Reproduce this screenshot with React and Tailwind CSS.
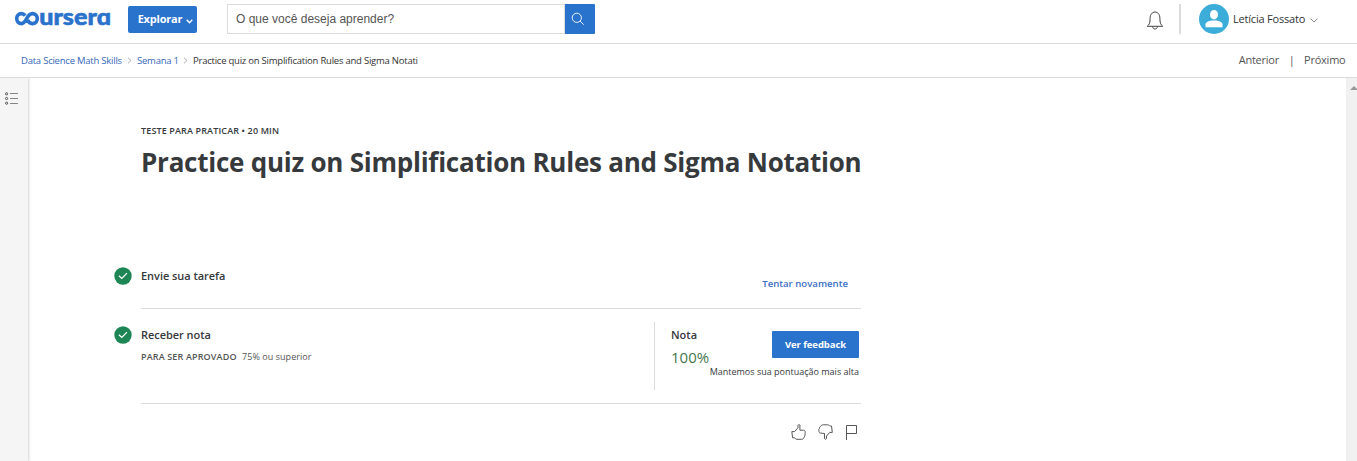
import React from "react";

function Logo() {
  return (
    <svg className="block h-[32px] w-[98px] shrink-0" viewBox="0 -8 98 32" role="img" aria-label="coursera">
      <path
        d="M11.2 5.6C10.2 4.3 8.9 3.6 7.5 3.6C4.7 3.6 2.7 5.8 2.7 8.6S4.7 13.6 7.5 13.6C12.6 13.6 12.4 3.6 18.4 3.6C21.3 3.6 23.3 5.8 23.3 8.6S21.3 13.6 18.4 13.6C15.8 13.6 14.2 12 13.6 9.8"
        fill="none" stroke="#2a73cc" strokeWidth="3.6"
      />
      <text x="25.2" y="15.3" textLength="72" lengthAdjust="spacingAndGlyphs" fill="#2a73cc" stroke="#2a73cc" strokeWidth="0.6"
        className="font-['Lato',sans-serif] text-[23px] font-black">urserɑ</text>
    </svg>
  );
}

function Check() {
  return (
    <svg className="block size-[18px] shrink-0" viewBox="0 0 18 18">
      <circle cx="9" cy="9" r="8.7" fill="#1e8555" />
      <path d="M4.9 8.7L7.8 11.4L13 6.1" fill="none" stroke="#fff" strokeWidth="1.3" />
    </svg>
  );
}

function Chevron() {
  return (
    <svg className="block h-[7px] w-[5px] shrink-0" viewBox="0 0 5 7">
      <path d="M1 .7L4 3.5L1 6.3" fill="none" stroke="#999" strokeWidth=".8" />
    </svg>
  );
}

function TopBar() {
  return (
    <header className="flex h-11 items-start border-b border-[#dcdcdc] pl-[14px]">
      <div className="pt-[2px]"><Logo /></div>
      <button className="mt-[6px] ml-[16px] flex h-[27px] w-[69px] items-center rounded-[2px] bg-[#2a73cc] pl-[9px] text-[11px] font-bold text-white">
        <span className="w-[46px] tracking-[-0.2px]">Explorar</span>
        <svg className="mt-[3px] ml-[3px] h-[5px] w-[7px]" viewBox="0 0 7 5">
          <path d="M.7 .8L3.5 3.7L6.3 .8" fill="none" stroke="#fff" strokeWidth="1.4" />
        </svg>
      </button>
      <div className="mt-1 ml-[30px] flex h-[30px] w-[368px]">
        <div className="flex flex-1 items-center border border-[#dcdcdc] pl-2 font-['Liberation_Sans',sans-serif] text-[12px] text-[#555]">
          O que você deseja aprender?
        </div>
        <button className="flex w-[30px] items-center rounded-r-[1px] bg-[#2a73cc] pl-[6px]">
          <svg className="size-[14px]" viewBox="0 0 14 14" fill="none" stroke="#fff" strokeWidth=".9">
            <circle cx="5.8" cy="5.8" r="4.6" /><path d="M9.1 9.1L12.7 12.7" />
          </svg>
        </button>
      </div>
      <div className="mt-1 ml-auto flex h-[30px] items-center">
        <svg className="mt-[3px] h-[19px] w-[18px]" viewBox="0 0 18 19" fill="none" stroke="#444" strokeWidth="1">
          <path d="M1.2 15.3C3.6 13.5 4.1 11.5 4.1 7.2C4.1 3.6 6.2 1 9 1S13.9 3.6 13.9 7.2C13.9 11.5 14.4 13.5 16.8 15.3Z" />
          <path d="M6.6 15.5C6.8 17.2 7.7 18 9 18S11.2 17.2 11.4 15.5" />
        </svg>
        <div className="ml-[15px] h-[30px] w-[2px] bg-[#dcdcdc]" />
        <svg className="ml-[18px] size-[30px]" viewBox="0 0 30 30">
          <circle cx="15" cy="15" r="15" fill="#3cadd8" />
          <ellipse cx="15" cy="10.7" rx="4" ry="4.8" fill="#fff" />
          <path d="M6.5 23.2V20.3C6.5 17.9 10.2 17 12.5 16.5H17.5C19.8 17 23.5 17.9 23.5 20.3V23.2Z" fill="#fff" />
        </svg>
        <span className="ml-[4px] w-[73px] text-[11px] tracking-[-0.2px] whitespace-nowrap text-[#333]">Letícia Fossato</span>
        <svg className="mt-[2px] ml-[4px] h-[5px] w-[8px]" viewBox="0 0 8 5">
          <path d="M.5 .6L4 4.1L7.5 .6" fill="none" stroke="#777" strokeWidth=".9" />
        </svg>
        <div className="w-[39px]" />
      </div>
    </header>
  );
}

function Breadcrumbs() {
  return (
    <nav className="flex h-[34px] items-center border-b border-[#dcdcdc] pr-[11.5px] pl-[21px] text-[9.5px] whitespace-nowrap text-[#333]">
      <span className="mt-px w-[101px] tracking-[-0.23px] text-[#3568b8]">Data Science Math Skills</span>
      <div className="ml-[5px]"><Chevron /></div>
      <span className="mt-px ml-[5px] w-[41px] tracking-[-0.23px] text-[#3568b8]">Semana 1</span>
      <div className="ml-[5px]"><Chevron /></div>
      <span className="mt-px ml-[5px] tracking-[-0.23px]">Practice quiz on Simplification Rules and Sigma Notati</span>
      <div className="ml-auto flex text-[11px] tracking-[-0.23px] text-[#555]">
        <span>Anterior</span><span className="w-[25px] text-center">|</span><span>Próximo</span>
      </div>
    </nav>
  );
}

function Feedback() {
  return (
    <div className="flex h-4 justify-end gap-[12px] pr-[3px]">
      <svg className="h-4 w-[15px]" viewBox="0 0 15 16" fill="none" stroke="#444" strokeWidth=".9">
        <path d="M.8 7.6H3.6L7 3.7V1.2C7.4 .4 8.7 .4 8.9 1.3V6.2H12.4C13.7 6.3 14.4 7.2 14.2 8.3C13.7 9.2 14.4 10 14.1 11C13.5 11.7 13.8 12.8 13 13.5C12.5 14.8 11.7 15.3 10.5 15.3H6C4.5 15.3 4.3 14 3.3 13.8H1.6Z" />
      </svg>
      <svg className="h-4 w-[15px]" viewBox="0 0 15 16" fill="none" stroke="#444" strokeWidth=".9">
        <path d="M2.6 9.1C1.3 8.8 .6 8 1 6.8C.5 5.9 .7 5 1.5 4.4C1.4 3.3 2 2.5 2.9 2.3C3.3 1.2 4.2 .8 5.3 .8H9.5C11 .8 11.3 1.8 12.3 2H13.5L14.3 8.4H11.7L8.5 12V14.6C8.1 15.6 6.8 15.4 6.5 14.4V9.5Z" />
      </svg>
      <svg className="h-4 w-[13px]" viewBox="0 0 13 16" fill="none" stroke="#555" strokeWidth="1">
        <path d="M1.5 16V1.5H11.5V9.5H1.5" />
      </svg>
    </div>
  );
}

export default function App() {
  return (
    <div className="flex h-[461px] w-[1357px] flex-col overflow-hidden bg-white font-['Open_Sans',sans-serif] text-[#373a3c]">
      <TopBar />
      <Breadcrumbs />
      <div className="flex min-h-0 flex-1 overflow-hidden">
        <aside className="w-7 shrink-0 bg-[#f5f5f5] pt-[14px] pl-[5px] shadow-[0_0_3px_#aaa]">
          <svg className="h-[13px] w-[14px]" viewBox="0 0 14 13" fill="none" stroke="#444" strokeWidth=".9">
            <circle cx="1.6" cy="1.8" r="1.1" /><circle cx="1.6" cy="6.5" r="1.1" /><circle cx="1.6" cy="11.2" r="1.1" />
            <path d="M5 1.5H13M5 6.5H13M5 11.5H13" stroke="#777" />
          </svg>
        </aside>
        <main className="ml-[86px] w-[747px] pt-[45px]">
          <div className="pl-[27px]">
            <div className="h-[15px] text-[9px] leading-[15px] font-semibold tracking-[0.14px] whitespace-nowrap">TESTE PARA PRATICAR • 20 MIN</div>
            <h1 className="mt-[6px] h-[36px] text-[26px] leading-[36px] font-bold tracking-[-0.24px] whitespace-nowrap">Practice quiz on Simplification Rules and Sigma Notation</h1>
          </div>
          <section className="mt-[87px] flex h-[42px]">
            <Check />
            <div className="ml-[9px] flex flex-1 justify-between border-b border-[#dcdcdc] text-[11px]">
              <h2 className="leading-[18px] font-semibold tracking-[-0.04px]">Envie sua tarefa</h2>
              <a className="mt-[8px] mr-[13px] text-[9.6px] leading-[18px] font-semibold text-[#3c6fc4]">Tentar novamente</a>
            </div>
          </section>
          <section className="flex h-[95px]">
            <div className="pt-[17px]"><Check /></div>
            <div className="ml-[9px] flex flex-1 border-b border-[#dcdcdc]">
              <div className="w-[513px] pt-[17px]">
                <h2 className="text-[11px] leading-[18px] font-semibold tracking-[-0.05px]">Receber nota</h2>
                <p className="mt-[5px] flex text-[9px] leading-[16px] whitespace-nowrap">
                  <span className="w-[101px] font-semibold tracking-[0.15px] text-[#555]">PARA SER APROVADO</span>
                  <span className="tracking-[0.05px] text-[#555]">75% ou superior</span>
                </p>
              </div>
              <div className="mt-[13px] flex h-[68px] flex-1 border-l border-[#dcdcdc] pl-[16px]">
                <div className="w-[38px] pt-[4px]">
                  <div className="text-[11px] leading-[18px] font-semibold">Nota</div>
                  <div className="mt-px text-[15px] leading-[24px] text-[#46784f]">100%</div>
                </div>
                <div className="flex flex-1 flex-col items-end pr-[2px] pt-[9px]">
                  <button className="h-[27px] w-[87px] rounded-[1px] bg-[#2a73cc] pt-px text-[9.5px] font-bold tracking-[-0.08px] text-white">Ver feedback</button>
                  <span className="mt-[7px] text-[9px] leading-[14px] whitespace-nowrap">Mantemos sua pontuação mais alta</span>
                </div>
              </div>
            </div>
          </section>
          <div className="mt-[20px]"><Feedback /></div>
        </main>
        <div className="ml-auto w-[11px] overflow-hidden bg-[#f1f1f1] pt-[8px] pl-[4px]">
          <svg className="h-[4px] w-[8px]" viewBox="0 0 8 4"><path d="M4 0L8 4H0Z" fill="#999" /></svg>
        </div>
      </div>
    </div>
  );
}
